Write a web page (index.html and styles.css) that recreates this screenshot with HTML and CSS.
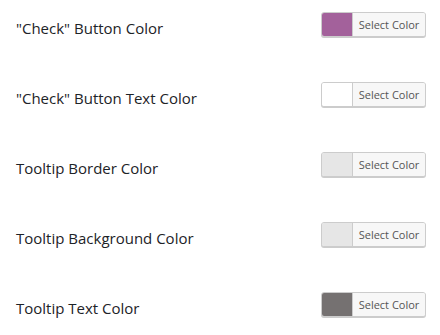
FILE: index.html
```html
<!DOCTYPE html>
<html>
<head>
<meta charset="utf-8">
<link rel="stylesheet" href="styles.css">
</head>
<body>
<div class="settings">
  <div class="row">
    <div class="label">"Check" Button Color</div>
    <button class="color-result"><span class="swatch" style="background:#a3619b"></span><span class="text">Select Color</span></button>
  </div>
  <div class="row">
    <div class="label">"Check" Button Text Color</div>
    <button class="color-result"><span class="swatch" style="background:#ffffff"></span><span class="text">Select Color</span></button>
  </div>
  <div class="row">
    <div class="label">Tooltip Border Color</div>
    <button class="color-result"><span class="swatch" style="background:#e6e6e6"></span><span class="text">Select Color</span></button>
  </div>
  <div class="row">
    <div class="label">Tooltip Background Color</div>
    <button class="color-result"><span class="swatch" style="background:#e6e6e6"></span><span class="text">Select Color</span></button>
  </div>
  <div class="row">
    <div class="label">Tooltip Text Color</div>
    <button class="color-result"><span class="swatch" style="background:#757171"></span><span class="text">Select Color</span></button>
  </div>
</div>
</body>
</html>
```

FILE: styles.css
```css
html, body {
  margin: 0;
  padding: 0;
  background: #ffffff;
}
body {
  font-family: "Open Sans", "Liberation Sans", sans-serif;
  color: #1d2327;
  overflow: hidden;
}
.settings {
  display: flex;
  flex-direction: column;
  padding: 0 14px 0 16px;
}
.row {
  display: flex;
  justify-content: space-between;
  align-items: flex-start;
  height: 70px;
}
.label {
  font-size: 15px;
  font-weight: 500;
  line-height: 20px;
  padding-top: 18px;
}
.color-result {
  margin-top: 12px;
  display: flex;
  align-items: stretch;
  box-sizing: border-box;
  width: 105px;
  height: 25px;
  padding: 0;
  border: 1px solid #cccccc;
  border-radius: 3px;
  background: #f7f7f7;
  box-shadow: 0 1px 0 #cccccc;
  overflow: hidden;
  cursor: pointer;
  font-family: "Open Sans", "Liberation Sans", sans-serif;
}
.swatch {
  width: 30px;
  flex: none;
  display: block;
}
.text {
  display: block;
  flex: 1;
  border-left: 1px solid #cccccc;
  padding: 0 5px;
  text-align: center;
  font-size: 11px;
  line-height: 23px;
  color: #555555;
  background: #f7f7f7;
}
```
